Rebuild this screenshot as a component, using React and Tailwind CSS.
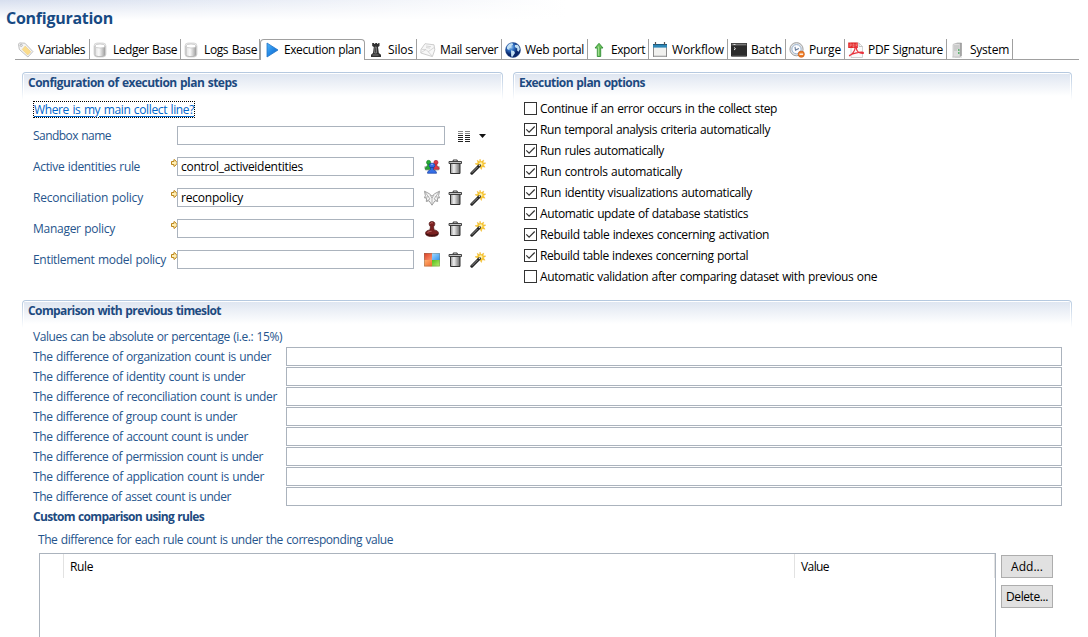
import React, { useLayoutEffect, useRef, useState } from "react";

/* Text whose tracking is adjusted so that it fills a given width. */
function Fit({ w, children, className = "" }) {
  const ref = useRef(null);
  const [spacing, setSpacing] = useState(0);
  useLayoutEffect(() => {
    const natural = ref.current.getBoundingClientRect().width;
    setSpacing((w - natural) / String(children).length);
  }, []);
  return (
    <span ref={ref} className={`inline-block whitespace-nowrap [word-spacing:0.7px] ${className}`} style={{ letterSpacing: spacing }}>
      {children}
    </span>
  );
}

function Icon({ children, className = "" }) {
  return (
    <svg viewBox="0 0 16 16" className={`h-4 w-4 shrink-0 ${className}`} fill="none">
      {children}
    </svg>
  );
}

const TagIcon = () => (
  <Icon>
    <path d="M.5 2.2 1.5.9l5.4.3 8 8.4-5 5.4L1.3 7.4z" fill="#f4f4f4" stroke="#b9b9b9" strokeWidth=".9" />
    <path d="m7.2 4.1 5.6 5.7-3.1 3.3-5.5-5.7z" fill="#fbdc8c" stroke="#e9c873" strokeWidth=".5" />
    <circle cx="3.2" cy="3.3" r="1.1" fill="#fff" stroke="#999" strokeWidth=".7" />
  </Icon>
);
const DatabaseIcon = () => (
  <Icon>
    <defs>
      <linearGradient id="db" x1="0" x2="1">
        <stop offset="0" stopColor="#e0e0e0" />
        <stop offset=".4" stopColor="#fafafa" />
        <stop offset="1" stopColor="#a0a0a0" />
      </linearGradient>
    </defs>
    <rect x="1" y="1" width="12" height="14" rx="3" fill="#ececec" stroke="#cfcfcf" strokeWidth=".7" />
    <path d="M2 4v8.8c0 2.4 10 2.4 10 0V4z" fill="url(#db)" stroke="#a5a5a5" strokeWidth=".7" />
    <ellipse cx="7" cy="4" rx="5" ry="2" fill="#fff" stroke="#bdbdbd" strokeWidth=".7" />
  </Icon>
);
const PlayIcon = () => (
  <Icon>
    <defs>
      <linearGradient id="play" x1="0" x2="1" y1="0" y2="1">
        <stop offset="0" stopColor="#52b7fa" />
        <stop offset=".5" stopColor="#2388e6" />
        <stop offset="1" stopColor="#1764bd" />
      </linearGradient>
    </defs>
    <path d="M3 1v14l11-7z" fill="url(#play)" stroke="#2275c8" strokeWidth=".8" strokeLinejoin="round" />
  </Icon>
);
const RookIcon = () => (
  <Icon>
    <path d="M4.2 1h2v1h1V1h2v1h1V1h1.3v3l-1.5 1 .8 6 2.2 1.7V15H3v-2.3L5 11l.8-6-1.6-1z" fill="#303030" />
    <path d="M7.1 5h1.3l.2 6H6.6zM4.5 13h6" stroke="#999" strokeWidth=".7" />
  </Icon>
);
const MailIcon = () => (
  <Icon>
    <path d="m1 7.4 4-5.7 9 1.1.8 5-2.4 6.8L.8 11z" fill="#f7f7f7" stroke="#c7c7c7" strokeWidth=".9" />
    <path d="m1 10.7 5-3.2 2.2 2.2L14 5.6M8.2 9.7l4 4.4M1.4 7.4l4.6.1M6 4l5 .7M6 5.6l4 .5" stroke="#cecece" strokeWidth=".8" />
  </Icon>
);
const GlobeIcon = () => (
  <Icon>
    <defs>
      <radialGradient id="globe" cx=".35" cy=".3">
        <stop offset="0" stopColor="#a4d1f5" />
        <stop offset=".5" stopColor="#2c6cc0" />
        <stop offset="1" stopColor="#0a2669" />
      </radialGradient>
    </defs>
    <circle cx="8" cy="8" r="7.5" fill="url(#globe)" stroke="#244d8e" strokeWidth=".5" />
    <path d="M2 5c1-2.5 3-3.7 5.5-3.7l.6 1.5-2 1.1.5 1.4-2 .8-.3 1.8L2 7zM10 3l2.5-.3c1.3 1.3 2.2 2.7 2.3 4.8l-1.3 2.2-1.4-1.3.2-2L9.8 5.1zM6 8.3l3 .8 1 1.8-2.5 3.8-1.3-.2z" fill="#c2dff3" />
  </Icon>
);
const UpIcon = () => (
  <Icon>
    <path d="M8 1.3 12 6H9.7v8.5H6.3V6H4z" fill="#6bc05a" stroke="#338f38" strokeWidth=".9" />
    <path d="M7.4 4.5v9.2" stroke="#a7e09a" />
  </Icon>
);
const CalendarIcon = () => (
  <Icon>
    <rect x="1.5" y="2.5" width="13" height="12" fill="#f1f1ef" stroke="#8c8c8c" />
    <path d="M1 2h14v3.6H1z" fill="#2e86b5" />
    <path d="M1 2.5h14" stroke="#195b82" />
    <path d="M3.5 0v3M12.5 0v3" stroke="#555" strokeWidth="1.2" />
    <path d="M2 14h12" stroke="#c1c1c1" />
  </Icon>
);
const TerminalIcon = () => (
  <Icon>
    <path d="M0 1h16v13.5H0z" fill="#2c2c2c" />
    <path d="M.5 1.5h15v2H.5z" fill="#777" stroke="#444" strokeWidth=".6" />
    <path d="M2.5 2.5h2" stroke="#ddd" />
    <path d="m3 5.5 1.5 1.2L3 8" stroke="#eee" />
    <path d="M1 14h14" stroke="#555" />
  </Icon>
);
const ClockIcon = () => (
  <Icon>
    <circle cx="7.5" cy="7.2" r="6.6" fill="#e5e5e5" stroke="#999" strokeWidth=".9" />
    <circle cx="7.5" cy="7.2" r="4.6" fill="#fdfdff" stroke="#8faac9" strokeWidth=".9" />
    <path d="m6 4.8.5 3.3 3.4-1.6" stroke="#6a7f9d" strokeWidth="1.1" />
    <circle cx="12.3" cy="12.2" r="3.1" fill="#ef7d25" stroke="#c65413" strokeWidth=".6" />
    <path d="M10.5 12.2h3.6" stroke="#fff" strokeWidth="1.3" />
  </Icon>
);
const PdfIcon = () => (
  <Icon>
    <path d="M3 1h8l3.5 3.5v11H3z" fill="#fafafa" stroke="#c6c6c6" strokeWidth=".8" />
    <path d="M11 1v3.5h3.5" stroke="#b7b7b7" strokeWidth=".8" />
    <path d="M.2.5h9.6V6H.2z" fill="#e22b2b" />
    <path d="M2 5V2h1.3v1.6H2M5 2v3h1V2zM8 5V2h1.5M8 3.5h1" stroke="#f9a5a5" strokeWidth=".5" />
    <path d="M1 14c3-1.3 6-5 6.2-8.2.1-1.6 1.6-1.5 1.3 0-.6 3 2.8 6 6.5 5.6.8-.2.4-1.2-.6-1.2C10.6 10 4 11.7 1.3 13.6" stroke="#e8303a" strokeWidth="1.2" />
  </Icon>
);
const ServerIcon = () => (
  <Icon>
    <path d="M5 2.2 7 1h4.5v12.5L10 15H5z" fill="#9d9d9d" stroke="#8f8f8f" strokeWidth=".5" />
    <path d="M3 2.5 5 1.5h5V15H3z" fill="#dedede" stroke="#b5b5b5" strokeWidth=".6" />
    <path d="M4 4h5M4 6h5M4 8h3" stroke="#b0b0b0" strokeWidth=".8" />
    <path d="M8 8h1.5M8 11h1.5" stroke="#3da853" strokeWidth="1.4" />
    <path d="M2 15h10" stroke="#d0d0d0" />
  </Icon>
);

const Pawn = ({ x, y, fill, dark }) => (
  <g transform={`translate(${x} ${y})`}>
    <circle cx="3" cy="2" r="1.9" fill={fill} stroke={dark} strokeWidth=".5" />
    <path d="M2.3 3.5h1.4l.3 2.2c1.8.5 2 1.2 2 2.5H0c0-1.3.2-2 2-2.5z" fill={fill} stroke={dark} strokeWidth=".5" />
  </g>
);
const PeopleIcon = () => (
  <Icon>
    <path d="M0 7.8 3 6.5l4 1.2-1 3.8H1.5zM16 7.8l-3-1.3-4 1.2 1 3.8h4.5z" fill="#a9b0a6" />
    <g transform="translate(.6 .6) scale(1.1)">
      <Pawn x={0.6} y={0.6} fill="#27ad35" dark="#117322" />
    </g>
    <g transform="translate(8.2 .6) scale(1.1)">
      <Pawn x={0.4} y={0.6} fill="#e03a45" dark="#99202b" />
    </g>
    <g transform="translate(3.5 4) scale(1.5 1.25)">
      <Pawn x={0} y={0} fill="#346fe8" dark="#153b9f" />
    </g>
    <path d="M7.1 6c.4-.8 1.5-.8 1.8 0" stroke="#b5cdfb" strokeWidth=".8" />
  </Icon>
);
const MaskIcon = () => (
  <Icon>
    <path
      d="m.5 1.2 4.6 2.4L8 6.2l2.9-2.6 4.6-2.4-.9 4.5 1 2-2.2.6.3 3.2-2.7-.8L8 15.2l-3-4.5-2.7.8.3-3.2-2.2-.6 1-2z"
      fill="#f6f6f6"
      stroke="#959595"
      strokeWidth=".9"
    />
    <path d="m1 2 5 7-3.5 2M15 2l-5 7 3.5 2M8 7v7M.7 7.7l4-1.2M15.3 7.7l-4-1.2M6 5l2 3 2-3" stroke="#a5a5a5" strokeWidth=".8" />
  </Icon>
);
const StampIcon = () => (
  <Icon>
    <path d="M8 .5c3.4 0 3.5 3.1 1.5 5.3l.6 3.1c3 .5 4.4 1.5 4.4 3.5 0 1.9-2.5 3.1-6.5 3.1s-6.5-1.2-6.5-3.1c0-2 1.4-3 4.4-3.5l.6-3.1C4.5 3.6 4.6.5 8 .5z" fill="#7a2020" stroke="#4b1212" strokeWidth=".7" />
    <path d="M6.5 2.6c.4-1 1.7-1.2 2.3-.5M3.5 11.6c1.2-1 2.6-1.2 4-1.3" stroke="#c97b76" strokeWidth=".9" />
    <path d="M2 13c2 1.7 10 1.7 12 0" stroke="#2d0b0b" />
  </Icon>
);
const ModelIcon = () => (
  <Icon>
    <defs>
      <linearGradient id="mred" x1="0" x2="1" y1="0" y2="1"><stop stopColor="#dc3b20" /><stop offset="1" stopColor="#fb9670" /></linearGradient>
      <linearGradient id="mblue" x1="0" x2="1" y1="0" y2="1"><stop stopColor="#a5dcff" /><stop offset="1" stopColor="#3293ec" /></linearGradient>
      <linearGradient id="morange" x1="0" x2="1" y1="0" y2="1"><stop stopColor="#ffb272" /><stop offset="1" stopColor="#f3682a" /></linearGradient>
      <linearGradient id="mgreen" x1="0" x2="1" y1="0" y2="1"><stop stopColor="#52ba1f" /><stop offset="1" stopColor="#bdf26b" /></linearGradient>
    </defs>
    <path d="M0 1h8v7H0z" fill="url(#mred)" />
    <path d="M8 1h8v7H8z" fill="url(#mblue)" />
    <path d="M0 8h8v6.5H0z" fill="url(#morange)" />
    <path d="M8 8h8v6.5H8z" fill="url(#mgreen)" />
    <path d="M.5 1.5h15V14H.5z" stroke="#776" strokeOpacity=".4" />
  </Icon>
);
const TrashIcon = () => (
  <Icon>
    <defs>
      <linearGradient id="can" x1="0" x2="1">
        <stop offset="0" stopColor="#909090" />
        <stop offset=".35" stopColor="#f0f0f0" />
        <stop offset="1" stopColor="#666" />
      </linearGradient>
    </defs>
    <path d="M3.5 4.5h9.5v10h-9.5z" fill="url(#can)" stroke="#333" />
    <path d="M2 2.5h12.5v2H2z" fill="#c4c4c4" stroke="#333" strokeWidth=".9" />
    <path d="M6.2 2.2V1h4v1.2" stroke="#333" />
  </Icon>
);
const WandIcon = () => (
  <Icon>
    <path d="m10 0 1 2.8L13.8 1 13 3.7l2.9.3-2.5 1.8 1.7 2.4-3-.5-.7 2.8-1.7-2.7L7 9l.7-3L5 4.8l3-.8-.8-2.8 2.3 1.6z" fill="#f8c832" stroke="#eeb01f" strokeWidth=".4" />
    <circle cx="10.8" cy="4.9" r="1.7" fill="#fff3b0" />
    <path d="m1.8 14.2 7.7-7.7" stroke="#252525" strokeWidth="3" strokeLinecap="round" />
    <path d="m1.8 13.8 5.9-5.9" stroke="#909090" strokeWidth="1" />
    <path d="m9 5.8 1 1" stroke="#ddd" strokeWidth="1.3" />
  </Icon>
);
const ColumnsIcon = () => (
  <svg viewBox="0 0 12 11" className="h-[11px] w-3" shapeRendering="crispEdges">
    {[0, 2, 4, 6, 8, 10].map((y) => (
      <g key={y} fill={y < 3 ? "#888" : "#222"}>
        <rect x="0" y={y} width="5" height="1" />
        <rect x="7" y={y} width="5" height="1" />
      </g>
    ))}
  </svg>
);
const ArrowMark = () => (
  <svg viewBox="0 0 7 8" className="h-2 w-[7px]" fill="none">
    <path d="M.5 2.5h2.4V.7h.8L6.5 4 3.7 7.3h-.8V5.5H.5z" fill="#ffefb5" stroke="#bb841a" strokeWidth="1" />
  </svg>
);

const tabs = [
  [TagIcon, "Variables", 47, "w-[75px]"],
  [DatabaseIcon, "Ledger Base", 64, "w-[91px]"],
  [DatabaseIcon, "Logs Base", 53, "w-[79px]"],
  [PlayIcon, "Execution plan", 77, "w-[105px]", true],
  [RookIcon, "Silos", 25, "w-[52px]"],
  [MailIcon, "Mail server", 58, "w-[85px]"],
  [GlobeIcon, "Web portal", 59, "w-[86px]"],
  [UpIcon, "Export", 34, "w-[61px]"],
  [CalendarIcon, "Workflow", 52, "w-[79px]"],
  [TerminalIcon, "Batch", 31, "w-[58px]"],
  [ClockIcon, "Purge", 32, "w-[59px]"],
  [PdfIcon, "PDF Signature", 75, "w-[102px]"],
  [ServerIcon, "System", 39, "w-[66px]"],
];

function Tab({ tab: [Glyph, label, w, width, active] }) {
  return (
    <div
      className={`flex h-full shrink-0 items-center border-[#a0a0a0] ${width} ${
        active ? "rounded-t-[4px] border-x border-t pl-[3px]" : "border-r border-b pt-0.5 pl-[3px]"
      }`}
    >
      <Glyph />
      <Fit w={w} className="ml-1">{label}</Fit>
    </div>
  );
}

function Section({ title, w, className = "", children }) {
  return (
    <section className={`flex flex-col ${className}`}>
      <div className="h-7 shrink-0 rounded-t-[4px] bg-linear-to-b from-[#b4c8df] to-white px-px pt-px">
        <div className="h-full rounded-t-[3px] bg-white px-px pt-px">
          <div className="flex h-[22px] items-center bg-linear-to-b from-[#dfe6f1] to-white pb-1 pl-1 font-bold text-[#1d4a80]">
            <Fit w={w}>{title}</Fit>
          </div>
        </div>
      </div>
      {children}
    </section>
  );
}

const policies = [
  ["Active identities rule", 107, PeopleIcon, "control_activeidentities", 122],
  ["Reconciliation policy", 110, MaskIcon, "reconpolicy", 62],
  ["Manager policy", 82, StampIcon, "", 0],
  ["Entitlement model policy", 133, ModelIcon, "", 0],
];

const options = [
  ["Continue if an error occurs in the collect step", 237, false],
  ["Run temporal analysis criteria automatically", 230, true],
  ["Run rules automatically", 124, true],
  ["Run controls automatically", 142, true],
  ["Run identity visualizations automatically", 212, true],
  ["Automatic update of database statistics", 208, true],
  ["Rebuild table indexes concerning activation", 229, true],
  ["Rebuild table indexes concerning portal", 208, true],
  ["Automatic validation after comparing dataset with previous one", 337, false],
];

const counts = [
  ["organization", 238],
  ["identity", 212],
  ["reconciliation", 244],
  ["group", 204],
  ["account", 215],
  ["permission", 230],
  ["application", 231],
  ["asset", 198],
];

function Field({ className, children }) {
  return <div className={`flex h-[19px] items-center border border-[#abb3bd] bg-white pl-[3px] text-black ${className}`}>{children}</div>;
}

export default function App() {
  return (
    <div className="flex h-[637px] w-[1088px] flex-col overflow-hidden bg-white font-['Open_Sans','Noto_Sans',sans-serif] text-[12px] leading-4 text-black">
      <header className="h-[39px] shrink-0 bg-linear-to-r from-[#d7dfef] via-[#eef1f8] via-30% to-white to-[52%]">
        <div className="flex h-full items-start bg-linear-to-b from-transparent to-white to-[20px] pt-2 pl-1.5">
          <Fit w={107} className="text-[16px] leading-[21px] font-bold text-[#174a83]">Configuration</Fit>
        </div>
      </header>

      <nav className="ml-[15px] flex h-[21px] w-[1064px] shrink-0">
        {tabs.map((tab) => (
          <Tab key={tab[1]} tab={tab} />
        ))}
        <div className="grow border-b border-[#a0a0a0]" />
      </nav>

      <div className="mt-3 ml-[22px] flex h-[228px] shrink-0 gap-[10px]">
        <Section title="Configuration of execution plan steps" w={209} className="w-[481px]">
          <div className="flex flex-col pl-[11px] text-[#25548c]">
            <div className="mt-px flex h-[17px] w-[162px] items-center border border-dotted border-black text-[#0066cc]">
              <Fit w={160} className="underline underline-offset-2">Where is my main collect line?</Fit>
            </div>
            <div className="mt-2 flex h-[19px] items-center">
              <div className="w-36 pt-px"><Fit w={78}>Sandbox name</Fit></div>
              <Field className="w-[268px]" />
              <span className="ml-[13px] pt-0.5"><ColumnsIcon /></span>
              <svg viewBox="0 0 7 4" className="ml-[9px] h-1 w-[7px]"><path d="M0 0h7L3.5 4z" fill="#111" /></svg>
            </div>
            {policies.map(([label, w, Glyph, value, valueWidth]) => (
              <div key={label} className="mt-3 flex h-[19px] items-center">
                <div className="w-[138px] pt-px"><Fit w={w}>{label}</Fit></div>
                <div className="h-4 w-1.5"><ArrowMark /></div>
                <Field className="w-[237px] pt-px">{value && <Fit w={valueWidth}>{value}</Fit>}</Field>
                <div className="ml-[10px] flex gap-[7px]">
                  <Glyph />
                  <TrashIcon />
                  <WandIcon />
                </div>
              </div>
            ))}
          </div>
        </Section>

        <Section title="Execution plan options" w={126} className="w-[559px]">
          <div className="flex flex-col pl-[11px]">
            {options.map(([label, w, checked]) => (
              <div key={label} className="flex h-[21px] items-start pt-0.5">
                <div className="h-[13px] w-[13px] border border-[#333] bg-white">
                  {checked && (
                    <svg viewBox="0 0 11 11" className="h-[11px] w-[11px]" fill="none">
                      <path d="m1.3 5.3 2.8 2.8 5.6-5.6" stroke="#333" strokeWidth="1.2" />
                    </svg>
                  )}
                </div>
                <Fit w={w} className="-mt-px ml-[3px]">{label}</Fit>
              </div>
            ))}
          </div>
        </Section>
      </div>

      <Section title="Comparison with previous timeslot" w={193} className="ml-[22px] w-[1050px] shrink-0">
        <div className="flex flex-col pl-[11px] text-[#25548c]">
          <div className="h-[19px] pt-px"><Fit w={249}>Values can be absolute or percentage (i.e.: 15%)</Fit></div>
          {counts.map(([kind, w]) => (
            <div key={kind} className="flex h-5 items-start">
              <div className="w-[253px] pt-0.5"><Fit w={w}>{`The difference of ${kind} count is under`}</Fit></div>
              <Field className="w-[776px]" />
            </div>
          ))}
          <div className="mt-0.5 h-[23px] font-bold text-[#1d4a80]"><Fit w={171}>Custom comparison using rules</Fit></div>
          <div className="ml-[5px] h-[21px]"><Fit w={355}>The difference for each rule count is under the corresponding value</Fit></div>
          <div className="ml-1.5 flex gap-[5px] text-black">
            <div className="h-[90px] w-[957px] border border-[#abb3bd] bg-white">
              <div className="flex h-6">
                <div className="w-6 border-r border-[#e2e2e2]" />
                <div className="flex w-[731px] items-center border-r border-[#e2e2e2] pt-px pl-1.5"><Fit w={23}>Rule</Fit></div>
                <div className="flex w-[200px] items-center border-r border-[#e2e2e2] pt-px pl-1.5"><Fit w={28}>Value</Fit></div>
              </div>
            </div>
            <div className="flex flex-col gap-[7px] pt-0.5">
              <div className="flex h-[23px] w-[52px] items-center justify-center border border-[#adadad] bg-[#e1e1e1]"><Fit w={32}>Add...</Fit></div>
              <div className="flex h-[23px] w-[52px] items-center justify-center border border-[#adadad] bg-[#e1e1e1]"><Fit w={42}>Delete...</Fit></div>
            </div>
          </div>
        </div>
      </Section>
    </div>
  );
}
